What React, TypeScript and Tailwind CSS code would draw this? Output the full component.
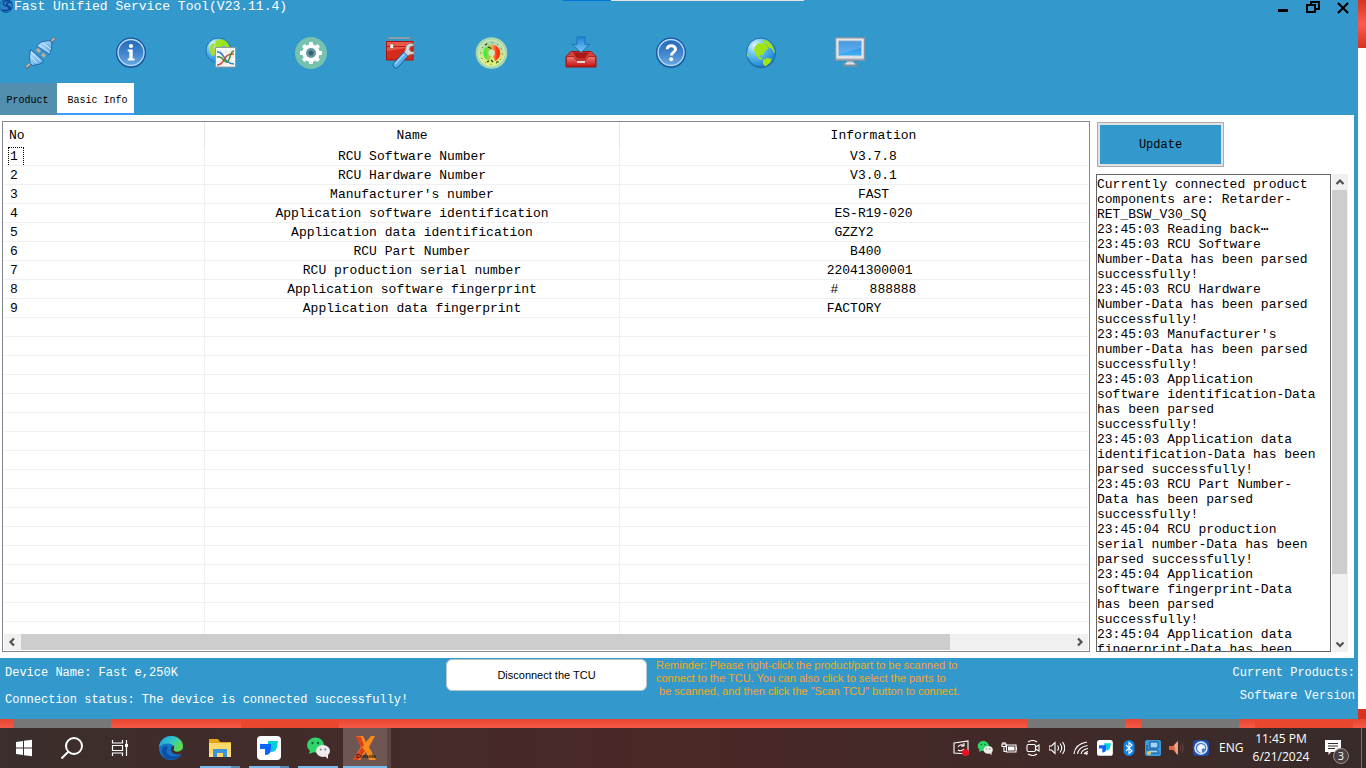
import React from 'react';
import clsx from 'clsx';

const rows = [
  { name: 'RCU Software Number', info: 'V3.7.8' },
  { name: 'RCU Hardware Number', info: 'V3.0.1' },
  { name: "Manufacturer's number", info: 'FAST' },
  { name: 'Application software identification', info: 'ES-R19-020' },
  { name: 'Application data identification', info: 'GZZY2     ' },
  { name: 'RCU Part Number', info: 'B400  ' },
  { name: 'RCU production serial number', info: '22041300001 ' },
  { name: 'Application software fingerprint', info: '#    888888' },
  { name: 'Application data fingerprint', info: 'FACTORY     ' },
];

const emptyRows = Array.from({ length: 17 }, (_, i) => i);

const log = [
  'Currently connected product components are: Retarder-RET_BSW_V30_SQ',
  '23:45:03 Reading back⋯',
  '23:45:03 RCU Software Number-Data has been parsed successfully!',
  '23:45:03 RCU Hardware Number-Data has been parsed successfully!',
  "23:45:03 Manufacturer's number-Data has been parsed successfully!",
  '23:45:03 Application software identification-Data has been parsed successfully!',
  '23:45:03 Application data identification-Data has been parsed successfully!',
  '23:45:03 RCU Part Number-Data has been parsed successfully!',
  '23:45:04 RCU production serial number-Data has been parsed successfully!',
  '23:45:04 Application software fingerprint-Data has been parsed successfully!',
  '23:45:04 Application data fingerprint-Data has been parsed successfully!',
].join('\n');

/* ---------- toolbar icons ---------- */

const Icon: React.FC<{ children: React.ReactNode }> = ({ children }) => (
  <svg viewBox="0 0 32 32" className="h-8 w-8 overflow-visible" aria-hidden="true">
    {children}
  </svg>
);

const ConnectIcon = () => (
  <Icon>
    <defs>
      <linearGradient id="plug" x1="0" y1="0" x2="1" y2="1">
        <stop offset="0" stopColor="#b9e0fb" />
        <stop offset="1" stopColor="#4fa3e6" />
      </linearGradient>
    </defs>
    <path d="M3 30 8 25M25 7l5-5.500" stroke="#6f6a68" strokeWidth="3" strokeLinecap="round" />
    <path d="M3 29.500 8 24.500M25 7l5-5.500" stroke="#d5c3b8" strokeWidth="1.500" strokeLinecap="round" />
    <path d="M12.500 9 17 5l7.500-1.500 3.500 1-.500 7-2 6z" fill="url(#plug)" stroke="#2169ad" />
    <path d="m6.500 12.500 13.500 11.500-4 3-7.500 1.500-2.500-2-.500-7z" fill="url(#plug)" stroke="#2169ad" />
    <path d="m13 12 3 3M18 17l3 2.500" stroke="#c9a898" strokeWidth="3" />
    <path d="m15.500 8 10.500 8M19 6l8 6.500M7 15l9.500 9M7 20l6 6" stroke="#d8effd" strokeWidth=".9" />
  </Icon>
);

const Disc = () => (
  <>
    <defs>
      <linearGradient id="disc" x1="0" y1="0" x2="0" y2="1">
        <stop offset="0" stopColor="#2468b8" />
        <stop offset=".5" stopColor="#3f83cc" />
        <stop offset="1" stopColor="#69a9e2" />
      </linearGradient>
    </defs>
    <circle cx="17" cy="16.500" r="14.800" fill="#1d4f86" opacity=".5" />
    <circle cx="17" cy="15.500" r="15" fill="#1453a4" />
    <circle cx="17" cy="15.500" r="13" fill="url(#disc)" stroke="#b5daf6" strokeWidth="1.400" />
  </>
);

const InfoIcon = () => (
  <Icon>
    <Disc />
    <circle cx="17" cy="9" r="2.100" fill="#fff" />
    <path d="M13.700 12.500h5v9h1.800v2h-6.800v-2h1.600v-7h-1.600z" fill="#fff" />
  </Icon>
);

const HelpIcon = () => (
  <Icon>
    <Disc />
    <path d="M13.200 12.200c0-5 8.300-4.500 8.300 0 0 3-4.200 3.300-4.200 6.300" fill="none" stroke="#fff" strokeWidth="3" />
    <circle cx="17.200" cy="22.200" r="2" fill="#fff" />
  </Icon>
);

const GlobeDefs = () => (
  <defs>
    <radialGradient id="sea" cx=".3" cy=".25" r=".9">
      <stop offset="0" stopColor="#e4f6ff" />
      <stop offset=".4" stopColor="#5fbdf0" />
      <stop offset="1" stopColor="#0a72c4" />
    </radialGradient>
  </defs>
);

const DataFlowIcon = () => (
  <Icon>
    <GlobeDefs />
    <circle cx="14.500" cy="13.500" r="12.500" fill="url(#sea)" stroke="#1c71b5" />
    <path d="m12 4 5-2 5 2 3 4 1 3h-4l-2-3-3 2-1 3-3-1-2-4z" fill="#9be31c" />
    <path d="m6 9 3-3 2 1-1 4 2 2-1 5-3 1-2-4-1-3z" fill="#a8dc3c" />
    <path d="M11.500 10.500h20v19.500h-20z" fill="#fafafa" stroke="#9a9a94" />
    <path d="M13 15h17M13 20h17M13 25h17M17 12v16M22 12v16M27 12v16" stroke="#d9dcda" strokeWidth=".7" />
    <path d="M13 15c8-1 6 12 17 12" fill="none" stroke="#2b7fc9" strokeWidth="1.500" />
    <path d="M13 28c9 0 5-12 17-11" fill="none" stroke="#d8453a" strokeWidth="1.500" />
    <path d="M13 20c6-2 7 6 10 5s3-11 7-11" fill="none" stroke="#3d8b26" strokeWidth="1.500" />
  </Icon>
);

const SettingsIcon = () => (
  <Icon>
    <circle cx="17" cy="16" r="16" fill="#76c2af" />
    <circle cx="17" cy="16" r="8.700" fill="#fff" />
    <g fill="#fff">
      {[0, 45, 90, 135, 180, 225, 270, 315].map((a) => (
        <rect key={a} x="15" y="5" width="4" height="5" rx="1" transform={`rotate(${a} 17 16)`} />
      ))}
    </g>
    <circle cx="17" cy="16" r="5" fill="#5f9aa0" />
    <circle cx="17" cy="16" r="2.500" fill="#3c5f73" />
  </Icon>
);

const ToolboxIcon = () => (
  <Icon>
    <path d="M4 4V1h23v3" fill="none" stroke="#6d8791" strokeWidth="1.800" />
    <path d="M5 1h21" stroke="#b9cbd0" strokeWidth=".7" />
    <path d="M2.500 4.500h26.500v18.500h-26.500z" fill="#d52b1c" stroke="#a8120c" />
    <path d="M3 5h25.500v5l-25.500 4z" fill="#e8594a" />
    <path d="M3 9.500h25" stroke="#a8120c" strokeWidth=".8" />
    <path d="M6 7h3.500v4.500h-3.500z" fill="#f4f4ee" stroke="#8b3a30" strokeWidth=".5" />
    <path d="M21.500 17.500 12 28" stroke="#17619c" strokeWidth="6.500" strokeLinecap="round" />
    <path d="M21.500 17.500 12 28" stroke="#55b2ee" strokeWidth="5" strokeLinecap="round" />
    <path d="M20 17.500 11 27" stroke="#a5dafb" strokeWidth="1.200" strokeLinecap="round" />
    <path
      d="M31 8c-3-3-9-2-9.500 3-.2 2-.5 3-1.500 4l4 4c1-1 2-1.500 3.500-1.500 2.500 0 3.500-1.500 3.500-2.500l-4-.500-1.500-2 .5-2.500z"
      fill="#d6d4d4"
      stroke="#77676a"
      strokeWidth=".8"
    />
  </Icon>
);

const GaugeIcon = () => (
  <Icon>
    <defs>
      <linearGradient id="dial" x1="0" y1="0" x2="0" y2="1">
        <stop offset="0" stopColor="#a9d6bd" />
        <stop offset="1" stopColor="#e6f56a" />
      </linearGradient>
      <linearGradient id="band" x1="0" y1="0" x2="1" y2="0">
        <stop offset=".1" stopColor="#35f23a" />
        <stop offset=".5" stopColor="#f3b457" />
        <stop offset=".8" stopColor="#ff3414" />
      </linearGradient>
    </defs>
    <circle cx="17.500" cy="16" r="15.800" fill="#a8d8b0" />
    <circle cx="17.500" cy="16" r="13" fill="url(#dial)" stroke="#d6ecb0" />
    <circle cx="17.500" cy="16.500" r="10.800" fill="none" stroke="#40582c" strokeWidth="1" strokeDasharray="1 4.650" />
    <path d="M14.500 24a8.500 8.500 0 1 1 6.500 0l-2.500-6z" fill="url(#band)" />
    <path d="m14 10 3.500 1.500M13 25l2-1M17 23l2 2M22 25h3M11 8l2-1" stroke="#263019" strokeWidth="1.200" />
    <circle cx="17.700" cy="16" r="3.200" fill="#cfe8b8" />
  </Icon>
);

const DownloadIcon = () => (
  <Icon>
    <defs>
      <linearGradient id="arrow" x1="0" y1="0" x2="0" y2="1">
        <stop offset="0" stopColor="#1d83d8" />
        <stop offset="1" stopColor="#7cc8f6" />
      </linearGradient>
      <linearGradient id="tray" x1="0" y1="0" x2="0" y2="1">
        <stop offset="0" stopColor="#ee7d78" />
        <stop offset="1" stopColor="#c4120f" />
      </linearGradient>
    </defs>
    <path d="M7 14.500h20l5 5v10.500h-30v-10.500z" fill="#d8433d" stroke="#9c1512" />
    <path d="M9 15.500h16l-4 6h-8z" fill="#a81a16" />
    <path d="M2.500 19.500h7l3 3.500h9l3-3.500h7v10h-29z" fill="url(#tray)" stroke="#a51411" strokeWidth=".8" />
    <path d="M13 25h8" stroke="#e9d7d5" strokeWidth="2" />
    <path d="M13 0h8v7.500h4.500l-8.500 8-8.500-8h4.500z" fill="url(#arrow)" stroke="#1868b0" strokeWidth=".8" />
  </Icon>
);

const GlobeIcon = () => (
  <Icon>
    <GlobeDefs />
    <circle cx="17" cy="16.500" r="14.800" fill="#1d4f86" opacity=".5" />
    <circle cx="17" cy="15.500" r="14.500" fill="url(#sea)" stroke="#1a6db5" />
    <path d="m11 9 3-2.500 5-.500 4 2 1 4-3 2-2 4h-3l-1 2 3 1 1 2-4-1-3-4-2-5z" fill="#a0e414" />
    <path d="m18 2.500 6 1.500 4 4 3 7-1 1-2-4-4-2-1-3-3-1z" fill="#a0e414" />
    <path d="m19 23 4-2 5 1-2 4-5 3.500-2-3z" fill="#a0e414" />
    <path d="M2.500 16.500 5 18l-1.500 2.500z" fill="#a0e414" />
  </Icon>
);

const MonitorIcon = () => (
  <Icon>
    <defs>
      <linearGradient id="screen" x1="0" y1="0" x2="0" y2="1">
        <stop offset="0" stopColor="#2f86d8" />
        <stop offset=".6" stopColor="#3c9bea" />
        <stop offset="1" stopColor="#35b4f9" />
      </linearGradient>
    </defs>
    <path d="M13 23h6v4h-6z" fill="#a9b5bd" />
    <path d="M9 26h14v3.500h-14z" fill="#7f8f9b" />
    <path d="M12 25.500h8l1 2h-10z" fill="#dfe5e8" />
    <path d="M1.500.800h29v22.500h-29z" fill="#e3e7ea" stroke="#8096a6" strokeWidth="1.500" />
    <path d="M4.500 3.800h23v15h-23z" fill="url(#screen)" stroke="#b9c6cf" strokeWidth=".8" />
    <path d="M5 4.200h22v6.800l-22 6z" fill="#fff" opacity=".15" />
    <path d="M2 21.500h28v1.500H2z" fill="#9eabb5" />
  </Icon>
);

const tools = [
  { label: 'Connect', Glyph: ConnectIcon },
  { label: 'Information', Glyph: InfoIcon },
  { label: 'Data flow', Glyph: DataFlowIcon },
  { label: 'Settings', Glyph: SettingsIcon },
  { label: 'Toolbox', Glyph: ToolboxIcon },
  { label: 'Gauge', Glyph: GaugeIcon },
  { label: 'Download', Glyph: DownloadIcon },
  { label: 'Help', Glyph: HelpIcon },
  { label: 'Language', Glyph: GlobeIcon },
  { label: 'Screen', Glyph: MonitorIcon },
];

/* ---------- application window ---------- */

const Chevron: React.FC<{ d: string }> = ({ d }) => (
  <svg viewBox="0 0 16 16" className="h-4 w-4 shrink-0" aria-hidden="true">
    <path d={d} fill="none" stroke="#505050" strokeWidth="2.200" />
  </svg>
);

const TitleBar = () => (
  <div className="relative flex h-3.5 justify-between">
    <h1 className="flex items-start text-[13px] leading-[14px] text-white">
      <svg viewBox="0 0 14 14" className="h-3.5 w-3.5" aria-hidden="true">
        <circle cx="6" cy="6" r="6.500" fill="#2c86c6" stroke="#1557a5" strokeWidth="1" />
        <path d="M10 1C5-1 2 3 4 5s5 0 5 3-4 3-7 2M12 3C9 1 6 3 7 5s5 1 3 5" fill="none" stroke="#0b459a" strokeWidth="1.600" />
      </svg>
      Fast Unified Service Tool(V23.11.4)
    </h1>
    <div className="flex gap-4 pr-2">
      <button aria-label="Minimize">
        <svg viewBox="0 0 14 14" className="h-3.5 w-3.5"><path d="M2 9h10v3H2z" /></svg>
      </button>
      <button aria-label="Restore">
        <svg viewBox="0 0 14 14" className="h-3.5 w-3.5">
          <path d="M5 5V2h8v7h-3M1 5h8v7H1z" fill="none" stroke="#000" strokeWidth="2" />
        </svg>
      </button>
      <button aria-label="Close">
        <svg viewBox="0 0 14 14" className="h-3.5 w-3.5">
          <path d="m2 3 10 10M12 3 2 13" stroke="#000" strokeWidth="2.200" />
        </svg>
      </button>
    </div>
    <div className="absolute top-0 left-[563px] flex h-px w-[241px] bg-[#e5e5e5]">
      <span className="w-12 bg-[#0078d7]" />
    </div>
  </div>
);

const InfoTable = () => (
  <section className="flex min-w-0 flex-1 flex-col border border-[#828790]">
    <div className="min-h-0 flex-1 overflow-hidden">
      <table className="w-[1124px] table-fixed border-separate border-spacing-0 text-[13px] leading-4">
        <colgroup>
          <col className="w-[202px]" />
          <col className="w-[415px]" />
          <col />
        </colgroup>
        <thead>
          <tr className="h-[25px]">
            <th className="border-r border-[#e5e5e5] p-0 pt-0.5 pl-1.5 text-left font-normal">No</th>
            <th className="border-r border-[#e5e5e5] p-0 pt-0.5 font-normal">Name</th>
            <th className="p-0 pt-0.5 font-normal">Information</th>
          </tr>
        </thead>
        <tbody>
          {rows.map((row, i) => (
            <tr key={row.name}>
              <td className="border-r border-b border-[#f0f0f0] p-0 pl-[5px]">
                <span
                  className={clsx(
                    'block w-4 border border-b-0 pt-px pl-px',
                    i === 0 ? 'border-dotted border-black' : 'border-transparent'
                  )}
                >
                  {i + 1}
                </span>
              </td>
              <td className="border-r border-b border-[#f0f0f0] p-0 pt-0.5 text-center">{row.name}</td>
              <td className="border-b border-[#f0f0f0] p-0 pt-0.5 text-center whitespace-pre">{row.info}</td>
            </tr>
          ))}
          {emptyRows.map((i) => (
            <tr key={i} className="h-[19px]">
              <td className="border-r border-b border-[#f0f0f0] p-0" />
              <td className="border-r border-b border-[#f0f0f0] p-0" />
              <td className="border-b border-[#f0f0f0] p-0" />
            </tr>
          ))}
        </tbody>
      </table>
    </div>
    <div className="mx-px mb-px flex h-4 bg-[#f0f0f0]">
      <Chevron d="M10 4.500 6.500 8l3.500 3.500" />
      <div className="flex-1 px-px">
        <div className="h-full w-[88.5%] bg-[#cdcdcd]" />
      </div>
      <Chevron d="M6 4.500 9.500 8 6 11.500" />
    </div>
  </section>
);

const LogPanel = () => (
  <aside className="flex w-[252px] flex-col items-start">
    <button className="mt-px ml-px h-[45px] w-[127px] border border-[#adadad] bg-[#e1e1e1] p-0.5 text-xs">
      <span className="flex h-full items-center justify-center bg-[#3399cc]">Update</span>
    </button>
    <div className="mt-[7px] flex min-h-0 w-full flex-1">
      <textarea
        readOnly
        aria-label="Log"
        value={log}
        className="w-[235px] resize-none overflow-hidden border border-[#646464] py-0.5 pr-2 text-[13px] leading-[15px] outline-none"
      />
      <div className="ml-px flex w-4 flex-col bg-[#f0f0f0]">
        <Chevron d="M4.500 10 8 6.500l3.500 3.500" />
        <div className="flex-1">
          <div className="h-[86%] w-[15px] bg-[#cdcdcd]" />
        </div>
        <Chevron d="M4.500 6.500 8 10l3.500-3.500" />
      </div>
    </div>
  </aside>
);

const StatusBar = () => (
  <footer className="flex h-[61px] bg-[#3399cc] text-xs leading-[19px] text-white">
    <div className="flex w-[446px] flex-col gap-2 pt-1.5 pl-[5px]">
      <p>Device Name: Fast e,250K</p>
      <p>Connection status: The device is connected successfully!</p>
    </div>
    <button className="mt-px h-8 w-[201px] rounded-md border border-[#b8c4cc] bg-white font-['Liberation_Sans',sans-serif] text-[11px] text-black">
      Disconnect the TCU
    </button>
    <p className="ml-[9px] pt-px font-['Liberation_Sans',sans-serif] text-[11px] leading-[13px] whitespace-pre text-[#f5a623]">
      {'Reminder: Please right-click the product/part to be scanned to\nconnect to the TCU. You can also click to select the parts to\n be scanned, and then click the "Scan TCU" button to connect.'}
    </p>
    <div className="ml-auto flex flex-col gap-1 pt-1.5 pr-[3px] text-right">
      <p>Current Products:</p>
      <p>Software Version</p>
    </div>
  </footer>
);

/* ---------- desktop ---------- */

const WallpaperStrip = () => (
  <div className="flex h-[9px] bg-linear-to-b from-[#e8452f] to-[#f55a48]">
    <div className="ml-[13px] w-[98px] bg-[#777]" />
    <div className="ml-[130px] w-[98px] bg-[#e9482e]" />
    <div className="ml-auto w-[98px] bg-[#777]" />
    <div className="ml-4 w-[98px] bg-[#777]" />
    <div className="mr-[13px] ml-4 w-[98px] bg-[#e9482e]" />
  </div>
);

const WeChat = () => (
  <>
    <ellipse cx="9.500" cy="9" rx="8.500" ry="7.500" fill="#2fd46a" />
    <path d="m4 14-1 4 5-2z" fill="#2fd46a" />
    <circle cx="6.500" cy="7" r="1.200" fill="#14632f" />
    <circle cx="12" cy="7" r="1.200" fill="#14632f" />
    <ellipse cx="17" cy="15" rx="7" ry="6" fill="#ececec" />
    <path d="m19 20 3 3v-5z" fill="#ececec" />
    <circle cx="14.700" cy="13.500" r="1" fill="#777" />
    <circle cx="19.300" cy="13.500" r="1" fill="#777" />
  </>
);

const Feishu = () => (
  <>
    <rect width="24" height="24" rx="4" fill="#fff" />
    <path d="M11 5h10l-1 6q-1 5-6 5V9h-3z" fill="#00d0dc" />
    <path d="M3 8h11v5q0 6-6 6V13H3z" fill="#0a66ff" />
  </>
);

const apps = [
  {
    label: 'Microsoft Edge',
    state: 'closed',
    art: (
      <>
        <defs>
          <linearGradient id="edgeTop" x1="0" y1="0" x2="1" y2=".4">
            <stop offset="0" stopColor="#1a9fe0" />
            <stop offset=".6" stopColor="#33c9c4" />
            <stop offset="1" stopColor="#5fdc4c" />
          </linearGradient>
        </defs>
        <circle cx="12" cy="12" r="12" fill="#1374cc" />
        <path d="M0 11C1 4 6 0 12 0c7 0 12 5 12 10 0 4-3 6-6 6-3 0-4-1-3-3 1-6-9-8-15-2z" fill="url(#edgeTop)" />
        <path d="M9 11c-4 6 2 12 12 8-5 7-17 6-18-3-.5-5 3-7 6-5z" fill="#0d4fa3" />
        <path d="M14.500 9.500c2 2-1 3.500.5 5 2 2 6 1.500 9-1.500v4.500c-5 2-11 1-12-3-.5-2 .5-4.500 2.500-5z" fill="#49292a" />
      </>
    ),
  },
  {
    label: 'File Explorer',
    state: 'many',
    art: (
      <>
        <path d="M1 3h9l2 3h11v15H1z" fill="#e8a317" />
        <path d="M1 7h22v14H1z" fill="#ffd867" />
        <path d="M5 21v-8h14v8h-4v-4H9v4z" fill="#3c94dc" />
        <path d="M1 17h4v4H1zM19 17h4v4h-4z" fill="#ffe08a" />
      </>
    ),
  },
  { label: 'Feishu', state: 'many', art: <Feishu /> },
  { label: 'WeChat', state: 'open', art: <WeChat /> },
  {
    label: 'Console',
    state: 'active',
    art: (
      <>
        <path d="M3 0h7l3 6 5-6h4l-6 11 7 13h-7l-3-8-6 8H0L8 11z" fill="#f98a1c" />
        <path d="m3 0 5 1 3 9-3 1zM0 24l9-13 3 4-7 9z" fill="#d9401c" />
        <text x="3" y="22" fontSize="5" fontWeight="bold" fill="#1a1010" fontFamily="Liberation Sans">Console</text>
      </>
    ),
  },
];

const white = { fill: 'none', stroke: '#fff', strokeWidth: 1.1 };

const trayIcons = [
  {
    label: 'Screen sync',
    art: (
      <>
        <path d="m1 3 14-2v13l-14-1z" {...white} />
        <path d="M5 7q3-4 6-1M5 10q3 2 6-1M11 3v3H8" {...white} />
        <circle cx="12.500" cy="12.500" r="3.500" fill="#e81123" />
      </>
    ),
  },
  { label: 'WeChat', art: <g transform="scale(.66)"><WeChat /></g> },
  {
    label: 'Battery',
    art: (
      <>
        <path d="M5.500 5h9.500v7H5.500z" {...white} />
        <path d="M7 6.500h6.500v4H7zM15 7h1v3h-1z" fill="#fff" />
        <path d="M1 4h4v2.500H1zM2 2v2M4 2v2M3 7v4.500h3" {...white} />
      </>
    ),
  },
  {
    label: 'Meet now',
    art: (
      <>
        <rect x="2" y="4.500" width="8.500" height="7" rx="1.500" {...white} />
        <path d="m10.500 7 3.500-2v6l-3.500-2M3 2q5-3 9 0M3 14q5 3 9 0" {...white} />
      </>
    ),
  },
  {
    label: 'Volume',
    art: <path d="M0 6h2.500L6 2.500v11L2.500 10H0zM8.500 5.500q2 2.500 0 5M11 3.500q3.500 4.500 0 9M13.500 2q4.500 6 0 12" {...white} />,
  },
  {
    label: 'Network',
    art: (
      <>
        <path d="M1 14Q2 4 14 2M4.500 14q1-7 10-8.500M8 14q1-4.500 7-5.500M11 14q1-2 4-2.500" {...white} />
        <circle cx="13.500" cy="13.500" r="1.300" fill="#fff" />
      </>
    ),
  },
  { label: 'Feishu', art: <g transform="scale(.66)"><Feishu /></g> },
  {
    label: 'Bluetooth',
    art: (
      <>
        <rect x="2.500" width="11" height="16" rx="5.500" fill="#0a84e8" />
        <path d="m5 5 6 6-3 2.500v-11L11 5l-6 6" {...white} />
      </>
    ),
  },
  {
    label: 'Remote',
    art: (
      <>
        <rect width="16" height="16" rx="2" fill="#3a9bdc" />
        <path d="M5 2h8v6H5zM3 10h9l2 3H4zM2 5v5" fill="#9fd6f5" stroke="#0f4f8f" />
        <circle cx="4" cy="13" r="2" fill="#d8c96a" />
      </>
    ),
  },
  {
    label: 'Audio device',
    art: (
      <>
        <path d="M0 6h4l5-5v14l-5-5H0z" fill="#d8674a" />
        <path d="M5 5.500 9 1v14l-2-2z" fill="#f1a184" />
        <path d="M11 5q2 3 0 6M13 3q3 5 0 10" fill="none" stroke="#6b4038" />
      </>
    ),
  },
  {
    label: 'Security',
    art: (
      <>
        <rect width="16" height="16" rx="4" fill="#1d4fae" />
        <circle cx="8" cy="8" r="6" fill="#4a7ed0" stroke="#dfeaf8" strokeWidth="1.500" />
        <path d="M4 9q0-4 4-5 5 1 4 5l-2-1-1.500 2 1 3q-4 0-5.500-4z" fill="#f2f7fd" />
      </>
    ),
  },
];

const TaskButton: React.FC<{ label: string; children: React.ReactNode }> = ({ label, children }) => (
  <button aria-label={label} className="flex w-12 items-center justify-center">
    <svg viewBox="0 0 24 24" className="h-6 w-6 overflow-visible">{children}</svg>
  </button>
);

const Taskbar = () => (
  <div className="flex h-10 bg-linear-to-r from-[#3b2e2c] via-[#4a2826] to-[#372b2a] font-['Open_Sans',sans-serif] text-xs text-white">
    <TaskButton label="Start">
      <path d="m4 6 7-1v6.500H4zM12 4.800l8-1v7.700h-8zM4 12.500h7V19l-7-1zM12 12.500h8v7.700l-8-1z" fill="#fff" />
    </TaskButton>
    <TaskButton label="Search">
      <circle cx="14" cy="10" r="8" fill="none" stroke="#fff" strokeWidth="2" />
      <path d="m8.500 15.500-7 7" stroke="#fff" strokeWidth="2" />
    </TaskButton>
    <TaskButton label="Task View">
      <path d="M4.500 4v3h10V4M4.500 20v-3h10v3M4.500 9.500h10v5h-10zM18.500 4v16" fill="none" stroke="#fff" strokeWidth="1.200" />
      <path d="M17 8h3v3h-3z" fill="#fff" />
    </TaskButton>
    <div className="ml-[3px] flex gap-px">
      {apps.map(({ label, state, art }) => (
        <div
          key={label}
          className={clsx('flex flex-col', state === 'active' && 'border-r-4 border-[#5f4542] bg-[#705653]')}
        >
          <button
            aria-label={label}
            className={clsx('flex h-[38px] items-center justify-center pt-0.5', state === 'active' ? 'w-11' : 'w-12')}
          >
            <svg viewBox="0 0 24 24" className="h-6 w-6 overflow-visible">{art}</svg>
          </button>
          {state !== 'closed' && (
            <div className={clsx('flex h-0.5 bg-[#76b9ed]', state !== 'active' && 'mx-1')}>
              {state === 'many' && <span className="ml-auto w-[9px] bg-[#5788ae]" />}
            </div>
          )}
        </div>
      ))}
    </div>
    <div className="ml-auto flex items-center">
      <div className="flex gap-2">
        {trayIcons.map(({ label, art }) => (
          <button key={label} aria-label={label}>
            <svg viewBox="0 0 16 16" className="h-4 w-4">{art}</svg>
          </button>
        ))}
      </div>
      <span className="ml-2.5 w-6">ENG</span>
      <div className="ml-2 w-[60px] text-center leading-[18px]">
        <p>11:45 PM</p>
        <p>6/21/2024</p>
      </div>
      <button aria-label="Notifications" className="relative ml-3.5 h-6 w-6">
        <svg viewBox="0 0 24 24" className="h-6 w-6 overflow-visible">
          <path d="M0 4h16v12H6l-2.500 3v-3H0z" fill="#fff" />
          <path d="M3 7.500h10M3 10h10M3 12.500h7" stroke="#3a2b2a" />
        </svg>
        <span className="absolute top-3 left-2 flex h-4 w-4 items-center justify-center rounded-full border border-[#9a9190] bg-[#4b4140] text-[11px]">
          3
        </span>
      </button>
      <span className="ml-3 h-full w-[5px] border-l border-[#80706e]" />
    </div>
  </div>
);

export default function App() {
  return (
    <div className="flex h-screen flex-col overflow-hidden bg-white font-['Liberation_Mono','Courier_New',monospace] text-black">
      <div className="flex min-h-0 flex-1">
        <div className="flex min-w-0 flex-1 flex-col bg-[#3399cc]">
          <TitleBar />
          <nav className="flex h-[69px] items-start gap-[58px] pt-[23px] pl-6">
            {tools.map(({ label, Glyph }) => (
              <button key={label} aria-label={label}>
                <Glyph />
              </button>
            ))}
          </nav>
          <div className="flex h-8 text-[10px]">
            <button className="w-[57px] bg-[#528eae] pt-0.5 pr-0.5">Product</button>
            <button className="w-[77px] border-b-2 border-[#3f9bff] bg-white pt-1 pl-1">Basic Info</button>
          </div>
          <main className="mr-1 flex min-h-0 flex-1 gap-1.5 bg-white py-1.5 pr-1.5 pl-0.5">
            <InfoTable />
            <LogPanel />
          </main>
          <StatusBar />
        </div>
        <div className="flex w-2 flex-col justify-between">
          <div className="h-12 bg-linear-to-b from-[#d5321f] via-[#ff5b4d] to-[#d5321f]" />
          <div className="h-2.5 bg-[#d9331f]" />
        </div>
      </div>
      <WallpaperStrip />
      <Taskbar />
    </div>
  );
}
